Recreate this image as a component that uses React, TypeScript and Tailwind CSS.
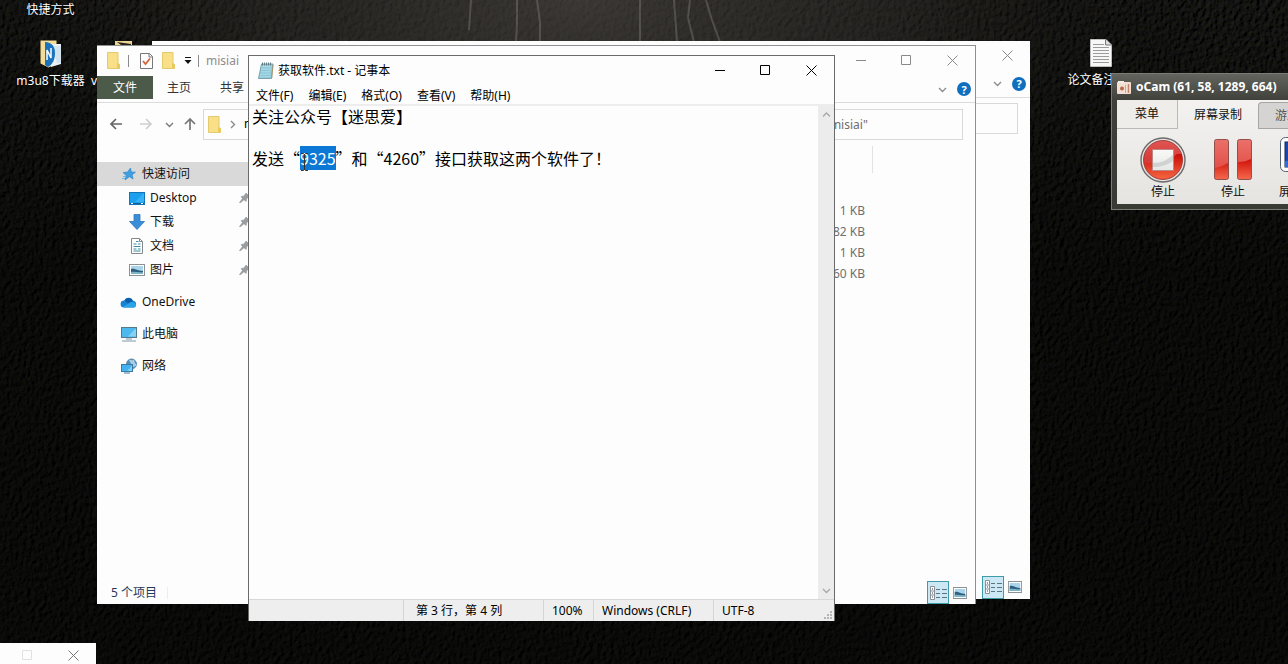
import { useEffect, useRef, type ReactNode } from "react";

const NOTE = "关注公众号【迷思爱】\n\n发送“9325”和“4260”接口获取这两个软件了！";

const MENUS = ["文件(F)", "编辑(E)", "格式(O)", "查看(V)", "帮助(H)"];

const SIZES = ["1 KB", "82 KB", "1 KB", "60 KB"];

/* ---------- icons ---------- */

function FolderIcon() {
  return (
    <svg width="13" height="17" viewBox="0 0 13 17" className="shrink-0">
      <path d="M0.5 0.5h10.5v11l1.5 1v4H0.5z" fill="#f8df88" stroke="#e3ca6c" />
      <path d="M10 11l2.5 1v4.5H10z" fill="#eacb5a" />
    </svg>
  );
}

function CheckPageIcon() {
  return (
    <svg width="13" height="17" viewBox="0 0 13 17" className="shrink-0">
      <path d="M0.5 1.5h9l3 3v12H0.5z" fill="#fdfdfd" stroke="#77777a" />
      <path d="M9 1.5v3.5h3.5" fill="none" stroke="#77777a" />
      <path d="M3 9l2.5 3L10 6.5" fill="none" stroke="#d4673a" strokeWidth="1.8" />
    </svg>
  );
}

const chevrons = {
  up: "M1 6.5L4.5 3L8 6.5",
  down: "M1 3L4.5 6.5L8 3",
  right: "M3 1L6.5 4.5L3 8",
};

function Chevron({ dir, color = "#8a8a8a" }: { dir: keyof typeof chevrons; color?: string }) {
  return (
    <svg width="9" height="9" viewBox="0 0 9 9" className="shrink-0">
      <path d={chevrons[dir]} fill="none" stroke={color} strokeWidth="1.4" />
    </svg>
  );
}

const arrows = {
  left: "M13 7H2M7 2L2 7l5 5",
  right: "M1 7h11M7 2l5 5l-5 5",
  up: "M7 13V2M2 7l5-5l5 5",
};

function Arrow({ dir, color }: { dir: keyof typeof arrows; color: string }) {
  return (
    <svg width="14" height="14" viewBox="0 0 14 14">
      <path d={arrows[dir]} fill="none" stroke={color} strokeWidth="1.7" />
    </svg>
  );
}

function HelpIcon() {
  return (
    <span className="flex size-[14px] items-center justify-center rounded-full bg-[#1170bd] text-[11px] leading-none font-bold text-white">
      ?
    </span>
  );
}

function PinIcon() {
  return (
    <svg width="11" height="12" viewBox="0 0 11 12">
      <path d="M7 1l3.500 3.500l-1 .5L7.500 7l-.3 2.500L5 7.800L1 11l-.5-.5L3.500 6.500L2 4.500l2.500-.3L6.500 2z" fill="#9a9ea3" stroke="#85898e" strokeWidth="0.5" />
    </svg>
  );
}

function StarIcon() {
  return (
    <svg width="14" height="14" viewBox="0 0 14 14">
      <path d="M8.500 1l.8 3.900l4.200.3l-3.400 2.500l1 4.300l-3.700-2.300L3 13l1.200-4.500L1 5.500l4.500-.4z" fill="#3f9fe0" stroke="#2a7fc4" strokeWidth="0.6" />
      <path d="M1 9.500h3M0 11.500h3" stroke="#6bb6ea" />
    </svg>
  );
}

function DesktopIcon() {
  return (
    <svg width="16" height="13" viewBox="0 0 16 13">
      <rect x="0.5" y="0.5" width="15" height="12" fill="#1aa0ee" stroke="#1674b4" />
      <path d="M15 1L6 10h9z" fill="#37b2f6" />
      <path d="M1 11.500h14" stroke="#0d5f9d" />
      <path d="M2 11.500h2M12 11.500h2" stroke="#fff" />
    </svg>
  );
}

function DownloadIcon() {
  return (
    <svg width="16" height="16" viewBox="0 0 16 16">
      <path d="M5 0.500h6v7h4.500L8 15.500L0.500 7.500H5z" fill="#3a8ed8" stroke="#2c77bd" strokeWidth="0.8" />
    </svg>
  );
}

function DocumentIcon() {
  return (
    <svg width="14" height="16" viewBox="0 0 14 16">
      <path d="M1.500 0.500h8l3 3v12h-11z" fill="#fff" stroke="#85898d" />
      <path d="M9.500 0.500v3h3" fill="none" stroke="#85898d" />
      <path d="M6 3.500h2.500M3.500 6h3M8 6h2.500M3.500 8.500h7M3.500 11h3M8 11h2.500M3.500 13h7" stroke="#3b8f9f" />
    </svg>
  );
}

function PictureIcon({ width = 16 }: { width?: number }) {
  return (
    <svg width={width} height="12" viewBox="0 0 16 12" preserveAspectRatio="none">
      <rect x="0.5" y="0.5" width="15" height="11" fill="#fff" stroke="#8c9196" />
      <rect x="2" y="2" width="12" height="8" fill="#a9d4ec" />
      <path d="M2 5c4-1 6 2 12 2v3H2z" fill="#2d5f7d" />
      <path d="M2 8c4-1 8 1 12 0v2H2z" fill="#7fb4c8" />
    </svg>
  );
}

function CloudIcon() {
  return (
    <svg width="17" height="11" viewBox="0 0 17 11">
      <path d="M4 10.500a3.500 3.500 0 0 1 .2-7A4.800 4.800 0 0 1 13 3.800a3.400 3.400 0 0 1 .5 6.700z" fill="#1683d2" />
      <path d="M4.500 3.500A4.600 4.600 0 0 1 12.800 4L8 6.500z" fill="#0c5eab" />
      <path d="M3 10L10 5.500c3-1.500 6 .5 6 2.500s-1 2.500-2.500 2.500H4z" fill="#2ba3e8" />
    </svg>
  );
}

function ComputerIcon() {
  return (
    <svg width="16" height="15" viewBox="0 0 16 15">
      <rect x="0.5" y="0.5" width="15" height="10" fill="#4cb8ee" stroke="#56798e" />
      <path d="M14 2L7 9.500h8V2z" fill="#84d3f6" />
      <path d="M5 12h6M1 14h14" stroke="#7c97a7" />
    </svg>
  );
}

function NetworkIcon() {
  return (
    <svg width="16" height="16" viewBox="0 0 16 16">
      <circle cx="10.500" cy="6" r="5" fill="#5590ba" stroke="#467b9f" strokeWidth="0.8" />
      <path d="M8 2c2-1 2 1 4 0s1 3 3 4s-2 3-3 3z" fill="#a9cfe6" />
      <rect x="0.5" y="6.5" width="11" height="7" fill="#43b2ee" stroke="#3c7ba2" />
      <path d="M11 7.500L6 13h5z" fill="#7fd0f6" />
      <path d="M3 15h6" stroke="#3c7ba2" />
    </svg>
  );
}

function NotepadIcon() {
  return (
    <svg width="16" height="17" viewBox="0 0 16 17" className="shrink-0">
      <path d="M3.500 2h11.500l-1.500 14.500H0.500z" fill="#8fcbdb" stroke="#6c8f9c" strokeWidth="0.8" />
      <path d="M4 3h9.500l-1.500 12H2z" fill="#a5d8e5" />
      <path d="M4 6h9M3.500 8.500h9M3 11h9.500M3 13.500h9" stroke="#7fbfd0" strokeWidth="0.7" />
      <path d="M4.500 0.500v3M6.500 0.500v3M8.500 0.500v3M10.500 0.500v3M12.500 0.500v3" stroke="#5b7680" strokeWidth="0.9" />
      <path d="M13.800 16L15 3" stroke="#b08d62" strokeWidth="0.8" />
    </svg>
  );
}

function DetailsIcon() {
  return (
    <svg width="17" height="14" viewBox="0 0 17 14">
      <path d="M0.500 0.500h4v13h-4zM0.500 5h4M0.500 9h4" fill="#fff" stroke="#8a9196" />
      <path d="M2 3h1M2 7h1M2 11h1" stroke="#333" />
      <path d="M6 3.500h4M12 3.500h5M6 7.500h4M12 7.500h5M6 11.500h4M12 11.500h5" stroke="#5e7480" />
    </svg>
  );
}

function CameraIcon() {
  return (
    <svg width="14" height="13" viewBox="0 0 14 13">
      <rect width="14" height="12" y="1" rx="1" fill="#f3e0d4" />
      <rect x="1" width="6" height="2" fill="#f5ece5" />
      <circle cx="5" cy="7.500" r="2" fill="#b3694a" />
      <path d="M8.500 4v8" stroke="#dba58b" />
      <path d="M11.500 3v9" stroke="#c9876a" strokeWidth="1.500" />
    </svg>
  );
}

function StopIcon() {
  return (
    <svg width="46" height="46" viewBox="0 0 46 46">
      <defs>
        <linearGradient id="stop-red" x1="0" y1="0" x2="0" y2="1">
          <stop offset="0" stopColor="#df5552" />
          <stop offset="0.55" stopColor="#d63a36" />
          <stop offset="1" stopColor="#ee5638" />
        </linearGradient>
        <linearGradient id="stop-glow" x1="0" y1="0" x2="0" y2="1">
          <stop offset="0" stopColor="#c80c05" />
          <stop offset="1" stopColor="#f4633f" />
        </linearGradient>
        <linearGradient id="stop-square" x1="0" y1="0" x2="0" y2="1">
          <stop offset="0" stopColor="#f9f9f7" />
          <stop offset="1" stopColor="#e6e8e5" />
        </linearGradient>
      </defs>
      <circle cx="23" cy="23" r="22" fill="#e6e3e1" stroke="#6b6b6b" strokeWidth="1.4" />
      <circle cx="23" cy="23" r="19.500" fill="url(#stop-red)" stroke="#8f302d" strokeWidth="0.8" />
      <path d="M4 26C18 27 30 24 37 17h4.500a20 20 0 0 1 1 6A19.500 19.500 0 0 1 4 26z" fill="url(#stop-glow)" />
      <rect x="12.500" y="12.500" width="21" height="21" fill="url(#stop-square)" stroke="#c08683" />
      <path d="M13 26c9 0 14-3 20-8v6c-6 4-12 6-20 6z" fill="#c4c8c6" opacity="0.7" />
    </svg>
  );
}

function PauseIcon() {
  return (
    <svg width="46" height="46" viewBox="0 0 46 46">
      <defs>
        <linearGradient id="pause-red" x1="0" y1="0" x2="0" y2="1">
          <stop offset="0" stopColor="#ea7069" />
          <stop offset="1" stopColor="#df453c" />
        </linearGradient>
        <linearGradient id="pause-glow" x1="0" y1="0" x2="0" y2="1">
          <stop offset="0" stopColor="#d0100a" />
          <stop offset="1" stopColor="#f4674a" />
        </linearGradient>
      </defs>
      <rect x="4.500" y="2.500" width="14" height="40" rx="2" fill="url(#pause-red)" />
      <rect x="27.500" y="2.500" width="14" height="40" rx="2" fill="url(#pause-red)" />
      <path d="M5 31c5-1 9-3 13-5v16H5zM28 25c5 0 9-1 13-3v20H28z" fill="url(#pause-glow)" />
      <rect x="4.500" y="2.500" width="14" height="40" rx="2" fill="none" stroke="#92504d" />
      <rect x="27.500" y="2.500" width="14" height="40" rx="2" fill="none" stroke="#92504d" />
    </svg>
  );
}

function ScreenIcon() {
  return (
    <svg width="46" height="46" viewBox="0 0 46 46">
      <rect x="0.5" y="0.5" width="45" height="34" rx="5" fill="#fdfdfd" stroke="#54606f" />
      <rect x="5" y="5" width="36" height="25" fill="#1d47a8" stroke="#12285e" />
      <path d="M5 24c10-1 24-8 36-19v25H5z" fill="#2f6cd6" />
      <path d="M8 38h30v3H8z" fill="#9aa0a8" />
    </svg>
  );
}

function MediaFolderIcon() {
  return (
    <svg width="22" height="28" viewBox="0 0 22 28">
      <path d="M0.500 0.500h16v23l-8 4l-8-4z" fill="#f3dc96" />
      <path d="M8 4h13v20l-10 3z" fill="#e9f1f6" />
      <path d="M12 6h9v17h-4z" fill="#d3e3ed" />
      <path d="M5 2c7 0 10 5 10 11s-2 11-7 14l-3-2z" fill="#1b73bd" />
      <path d="M7 20V10l4 8V8" fill="none" stroke="#fff" strokeWidth="1.5" />
    </svg>
  );
}

function OpenFolderIcon() {
  return (
    <svg width="17" height="28" viewBox="0 0 17 28">
      <path d="M0 1h17v24H0z" fill="#ecd592" />
      <path d="M2 2l14 2v1H6z" fill="#26231d" />
    </svg>
  );
}

function TextFileIcon() {
  return (
    <svg width="22" height="28" viewBox="0 0 22 28">
      <path d="M0.500 0.500H16l5.500 5.500v21.500H0.500z" fill="#f7f7f7" stroke="#bdbdbd" />
      <path d="M15.500 0.500v5.500h6" fill="#ddd" stroke="#777" />
      <path d="M3 5.500h11M3 8.500h16M3 11.500h16M3 14.500h16M3 17.500h16M3 20.500h16M3 23.500h16" stroke="#9b9b9b" />
    </svg>
  );
}

/* ---------- desktop ---------- */

// grained leather wallpaper, lit from the top
function Wallpaper() {
  return (
    <svg className="absolute inset-0 size-full" aria-hidden="true">
      <defs>
        <filter id="leather" x="0" y="0" width="100%" height="100%">
          <feTurbulence type="fractalNoise" baseFrequency="0.24 0.2" numOctaves="4" seed="7" result="grain" />
          <feDiffuseLighting in="grain" surfaceScale="1.1" diffuseConstant="1" lightingColor="#2c2b28">
            <feDistantLight azimuth="215" elevation="18" />
          </feDiffuseLighting>
        </filter>
        <radialGradient id="glow" cx="0.45" cy="0" r="0.5">
          <stop offset="0" stopColor="#4c4844" stopOpacity="0.7" />
          <stop offset="0.5" stopColor="#37332f" stopOpacity="0.45" />
          <stop offset="1" stopColor="#000" stopOpacity="0" />
        </radialGradient>
        <linearGradient id="shade" x1="0" y1="0" x2="0" y2="1">
          <stop offset="0" stopColor="#000" stopOpacity="0.1" />
          <stop offset="0.4" stopColor="#000" stopOpacity="0.5" />
          <stop offset="1" stopColor="#000" stopOpacity="0.55" />
        </linearGradient>
      </defs>
      <rect width="100%" height="100%" filter="url(#leather)" />
      <rect width="100%" height="100%" fill="url(#shade)" />
      <rect width="100%" height="100%" fill="url(#glow)" />
      <path
        d="M471 0l-2 30M517 0v24l-1 18M537 0l3 22v20M640 0v42M674 0l3 42M690 0l-2 18l6 24M706 0l6 20l8 22"
        fill="none"
        stroke="#86817a"
        strokeWidth="2"
        opacity="0.4"
      />
    </svg>
  );
}

function DesktopShortcut({ icon, label }: { icon?: ReactNode; label: string }) {
  return (
    <a href="#" className="flex w-[75px] flex-col items-center gap-[5px] text-white">
      {icon}
      <span className="whitespace-nowrap [text-shadow:1px_1px_2px_#000]">{label}</span>
    </a>
  );
}

/* ---------- window parts ---------- */

function WindowControls({ color, only }: { color: string; only?: "max-close" | "close" }) {
  return (
    <div className="ml-auto flex shrink-0 self-stretch">
      {!only && (
        <button aria-label="最小化" className="flex w-[46px] items-center justify-center">
          <svg width="11" height="11" viewBox="0 0 11 11"><path d="M0 5.500h10" stroke={color} /></svg>
        </button>
      )}
      {only !== "close" && (
        <button aria-label="最大化" className="flex w-[45px] items-center justify-center">
          <svg width="11" height="11" viewBox="0 0 11 11" opacity={only ? 0.2 : 1}>
            <path d="M0.500 0.500h9v9h-9z" fill="none" stroke={color} />
          </svg>
        </button>
      )}
      <button aria-label="关闭" className="flex w-[46px] items-center justify-center">
        <svg width="11" height="11" viewBox="0 0 11 11"><path d="M0.500 0.500l10 10M10.500 0.500l-10 10" stroke={color} /></svg>
      </button>
    </div>
  );
}

function RibbonEnd() {
  return (
    <div className="ml-auto flex items-center gap-[10px] self-center pr-1">
      <Chevron dir="down" color="#8d8d8d" />
      <HelpIcon />
    </div>
  );
}

function ViewButtons() {
  return (
    <div className="ml-auto flex items-center gap-1 pr-2">
      <button aria-label="详细信息" className="flex h-[23px] w-[22px] items-center justify-center border border-[#3f9ba6] bg-[#cce8f4]">
        <DetailsIcon />
      </button>
      <button aria-label="大图标" className="flex"><PictureIcon width={14} /></button>
    </div>
  );
}

interface SideItemProps {
  icon: ReactNode;
  label: string;
  nested?: boolean;
  active?: boolean;
}

function SideItem({ icon, label, nested, active }: SideItemProps) {
  return (
    <a href="#" className={`flex h-6 items-center gap-[5px] ${nested ? "pl-[31px]" : "pl-[23px]"} ${active ? "bg-[#d9d9d9]" : ""}`}>
      <span className="flex w-[17px] justify-center">{icon}</span>
      <span>{label}</span>
      {nested && <span className="mr-[7px] ml-auto"><PinIcon /></span>}
    </a>
  );
}

function Sidebar() {
  return (
    <nav className="flex w-[160px] flex-col gap-2 pt-[17px] text-[#111]">
      <div>
        <SideItem icon={<StarIcon />} label="快速访问" active />
        <SideItem icon={<DesktopIcon />} label="Desktop" nested />
        <SideItem icon={<DownloadIcon />} label="下载" nested />
        <SideItem icon={<DocumentIcon />} label="文档" nested />
        <SideItem icon={<PictureIcon />} label="图片" nested />
      </div>
      <SideItem icon={<CloudIcon />} label="OneDrive" />
      <SideItem icon={<ComputerIcon />} label="此电脑" />
      <SideItem icon={<NetworkIcon />} label="网络" />
    </nav>
  );
}

function ExplorerWindow() {
  return (
    <section className="absolute top-[45px] left-[97px] flex h-[559px] w-[879px] flex-col border-t border-r border-[#8f8f8f] bg-[#fdfdfd]">
      <header className="flex h-[29px] shrink-0 items-center pl-[10px]">
        <FolderIcon />
        <span className="mx-2 h-3 w-px bg-[#8a8a8a]" />
        <span className="ml-[3px] flex items-center gap-[9px]">
          <CheckPageIcon />
          <FolderIcon />
          <svg width="8" height="8" viewBox="0 0 8 8"><path d="M1 0.500h6" stroke="#111" /><path d="M0.500 3h7L4 7z" fill="#111" /></svg>
        </span>
        <span className="mr-[7px] ml-[6px] h-3 w-px bg-[#8a8a8a]" />
        <span className="text-[#8c8c8c]">misiai</span>
        <WindowControls color="#8a8a8a" />
      </header>
      <div className="flex h-7 shrink-0 items-start border-b border-[#dcdcdc] pt-px">
        <button className="h-[23px] w-14 bg-[#4c5b49] pt-px text-white">文件</button>
        <button className="h-[23px] w-[52px] pt-px text-[#333]">主页</button>
        <button className="h-[23px] w-[54px] pt-px text-[#333]">共享</button>
        <RibbonEnd />
      </div>
      <div className="flex h-[42px] shrink-0 items-center pl-3">
        <button aria-label="后退"><Arrow dir="left" color="#666" /></button>
        <button aria-label="前进" className="ml-4"><Arrow dir="right" color="#cfcfcf" /></button>
        <button aria-label="最近" className="ml-3"><Chevron dir="down" color="#7a7a7a" /></button>
        <button aria-label="上移" className="ml-[9px]"><Arrow dir="up" color="#777" /></button>
        <div className="ml-[6px] flex h-[31px] flex-1 items-center gap-[7px] border border-[#d9d9d9] pl-1">
          <FolderIcon />
          <Chevron dir="right" />
          <span>misiai</span>
        </div>
        <input
          aria-label="搜索"
          placeholder={'搜索"misiai"'}
          className="mr-3 ml-3 h-[31px] w-[190px] border border-[#d9d9d9] pl-[27px] placeholder:text-[#6d6d6d]"
        />
      </div>
      <div className="flex flex-1">
        <Sidebar />
        <div className="flex flex-1 flex-col">
          <div className="mt-px flex h-[27px] justify-end pr-[102px]"><span className="w-px bg-[#e2e2e2]" /></div>
          <ul className="mt-[27px] self-end pr-[110px] text-right text-[#6f6f6f]">
            {SIZES.map((s, i) => <li key={i} className="h-[21px] leading-[21px]">{s}</li>)}
          </ul>
        </div>
      </div>
      <footer className="flex h-[23px] items-center pl-[14px] text-[#253a5a]">
        <span>5 个项目</span>
        <span className="ml-[10px] h-3 w-px bg-[#eee]" />
        <ViewButtons />
      </footer>
    </section>
  );
}

// the second folder window shows only its right edge
function BackExplorer() {
  return (
    <section className="absolute top-[41px] left-[152px] flex h-[558px] w-[878px] flex-col bg-[#fdfdfd]">
      <header className="flex h-7"><WindowControls color="#8a8a8a" only="close" /></header>
      <div className="flex h-[29px] items-center border-b border-[#dcdcdc] pt-px"><RibbonEnd /></div>
      <div className="flex flex-1 items-start justify-end pt-[5px] pr-3">
        <input aria-label="搜索" className="h-[31px] w-[190px] border border-[#d9d9d9]" />
      </div>
      <footer className="flex h-6"><ViewButtons /></footer>
    </section>
  );
}

function NotepadWindow() {
  const area = useRef<HTMLTextAreaElement>(null);

  useEffect(() => {
    const start = NOTE.indexOf("9325");
    area.current?.focus();
    area.current?.setSelectionRange(start, start + 4);
  }, []);

  return (
    <section className="absolute top-[55px] left-[248px] flex h-[566px] w-[587px] flex-col border border-b-0 border-[#6a6a6a] bg-[#fdfdfd] text-black">
      <header className="flex h-[29px] shrink-0 items-center gap-1 pl-[9px]">
        <NotepadIcon />
        <h1>获取软件.txt - 记事本</h1>
        <WindowControls color="#000" />
      </header>
      <div className="flex h-[21px] shrink-0 items-center gap-px border-b-2 border-[#ededed] pt-[3px]">
        {MENUS.map((m) => <button key={m} className="px-[7px] whitespace-nowrap">{m}</button>)}
      </div>
      <div className="relative flex flex-1">
        <textarea
          ref={area}
          aria-label="文本编辑器"
          spellCheck={false}
          defaultValue={NOTE}
          className="flex-1 resize-none overflow-hidden bg-transparent pl-[3px] font-['Noto_Sans_CJK_SC',sans-serif] text-[16px] leading-[21px] outline-none selection:bg-[#0a78d4] selection:text-white"
        />
        <svg width="9" height="20" viewBox="0 0 9 20" className="absolute top-[46px] left-[51px]">
          <path d="M1 1.500h2.500l1 1l1-1H8M4.500 2v16M1 18.500h2.500l1-1l1 1H8" fill="none" stroke="#3b3227" />
        </svg>
        <div className="flex w-4 flex-col items-center justify-between bg-[#ececec] py-1">
          <button aria-label="向上滚动"><Chevron dir="up" color="#a8a8a8" /></button>
          <button aria-label="向下滚动"><Chevron dir="down" color="#a8a8a8" /></button>
        </div>
      </div>
      <footer className="flex h-[22px] shrink-0 items-stretch justify-end border-t border-[#d8d8d8] bg-[#eeeeee] leading-[21px]">
        <span className="w-[140px] border-l border-[#d5d5d5] pl-3">第 3 行，第 4 列</span>
        <span className="w-[50px] border-l border-[#d5d5d5] pl-2">100%</span>
        <span className="w-[120px] border-l border-[#d5d5d5] pl-2">Windows (CRLF)</span>
        <span className="flex w-[121px] justify-between border-l border-[#d5d5d5] pl-2">
          UTF-8
          <svg width="10" height="10" viewBox="0 0 10 10" className="self-end">
            <path d="M6 0h2v2H6zM3 3h2v2H3zM6 3h2v2H6zM0 6h2v2H0zM3 6h2v2H3zM6 6h2v2H6z" fill="#b5b5b5" />
          </svg>
        </span>
      </footer>
    </section>
  );
}

function ToolButton({ icon, label }: { icon: ReactNode; label: string }) {
  return (
    <button className="flex w-[70px] shrink-0 flex-col items-center">
      {icon}
      <span className="leading-[18px]">{label}</span>
    </button>
  );
}

function OCamWindow() {
  return (
    <section className="absolute top-[73px] left-[1111px] flex h-[137px] w-[420px] flex-col border border-[#7b7b76] bg-linear-to-b from-[#64645f] via-[#40403b] via-20% to-[#3a3a35] px-[5px] pb-[5px] text-[#111]">
      <header className="flex h-[26px] items-center gap-[5px] font-bold text-white">
        <CameraIcon />
        <h2>oCam (61, 58, 1289, 664)</h2>
      </header>
      <div className="flex flex-1 flex-col bg-linear-to-b from-[#f3f2f0] to-[#e6e4e1]">
        <div role="tablist" className="flex h-[29px] shrink-0">
          <button role="tab" className="w-[61px] border-r border-b border-[#b9b9b9] bg-[#eeedea]">菜单</button>
          <button role="tab" aria-selected="true" className="w-[80px] rounded-t-sm">屏幕录制</button>
          <button role="tab" className="mt-[2px] flex-1 rounded-tl-sm border-t border-b border-l border-[#a5a5a5] bg-[#d5d4d2] pl-4 text-left text-[#555]">游戏录制</button>
        </div>
        <div className="flex flex-1 items-start overflow-hidden pt-2 pl-[11px]">
          <ToolButton icon={<StopIcon />} label="停止" />
          <ToolButton icon={<PauseIcon />} label="停止" />
          <ToolButton icon={<ScreenIcon />} label="屏幕捕获" />
        </div>
      </div>
    </section>
  );
}

export default function App() {
  return (
    <main className="relative h-screen w-full overflow-hidden bg-[#0b0b0b] font-['Noto_Sans','Noto_Sans_CJK_SC',sans-serif] text-[12px] leading-4">
      <Wallpaper />
      <div className="absolute top-[2px] left-[13px] flex flex-col gap-[22px]">
        <DesktopShortcut label="快捷方式" />
        <div className="flex">
          <DesktopShortcut icon={<MediaFolderIcon />} label="m3u8下载器" />
          <div className="flex flex-col items-start gap-[5px] pl-[3px] text-white">
            <span className="pl-6"><OpenFolderIcon /></span>
            <span>v</span>
          </div>
        </div>
      </div>
      <div className="absolute top-[39px] left-[1063px]">
        <DesktopShortcut icon={<TextFileIcon />} label="论文备注.txt" />
      </div>
      <BackExplorer />
      <ExplorerWindow />
      <NotepadWindow />
      <OCamWindow />
      <section className="absolute top-[643px] left-0 flex h-6 w-24 bg-[#fdfdfd]">
        <WindowControls color="#777" only="max-close" />
      </section>
    </main>
  );
}
